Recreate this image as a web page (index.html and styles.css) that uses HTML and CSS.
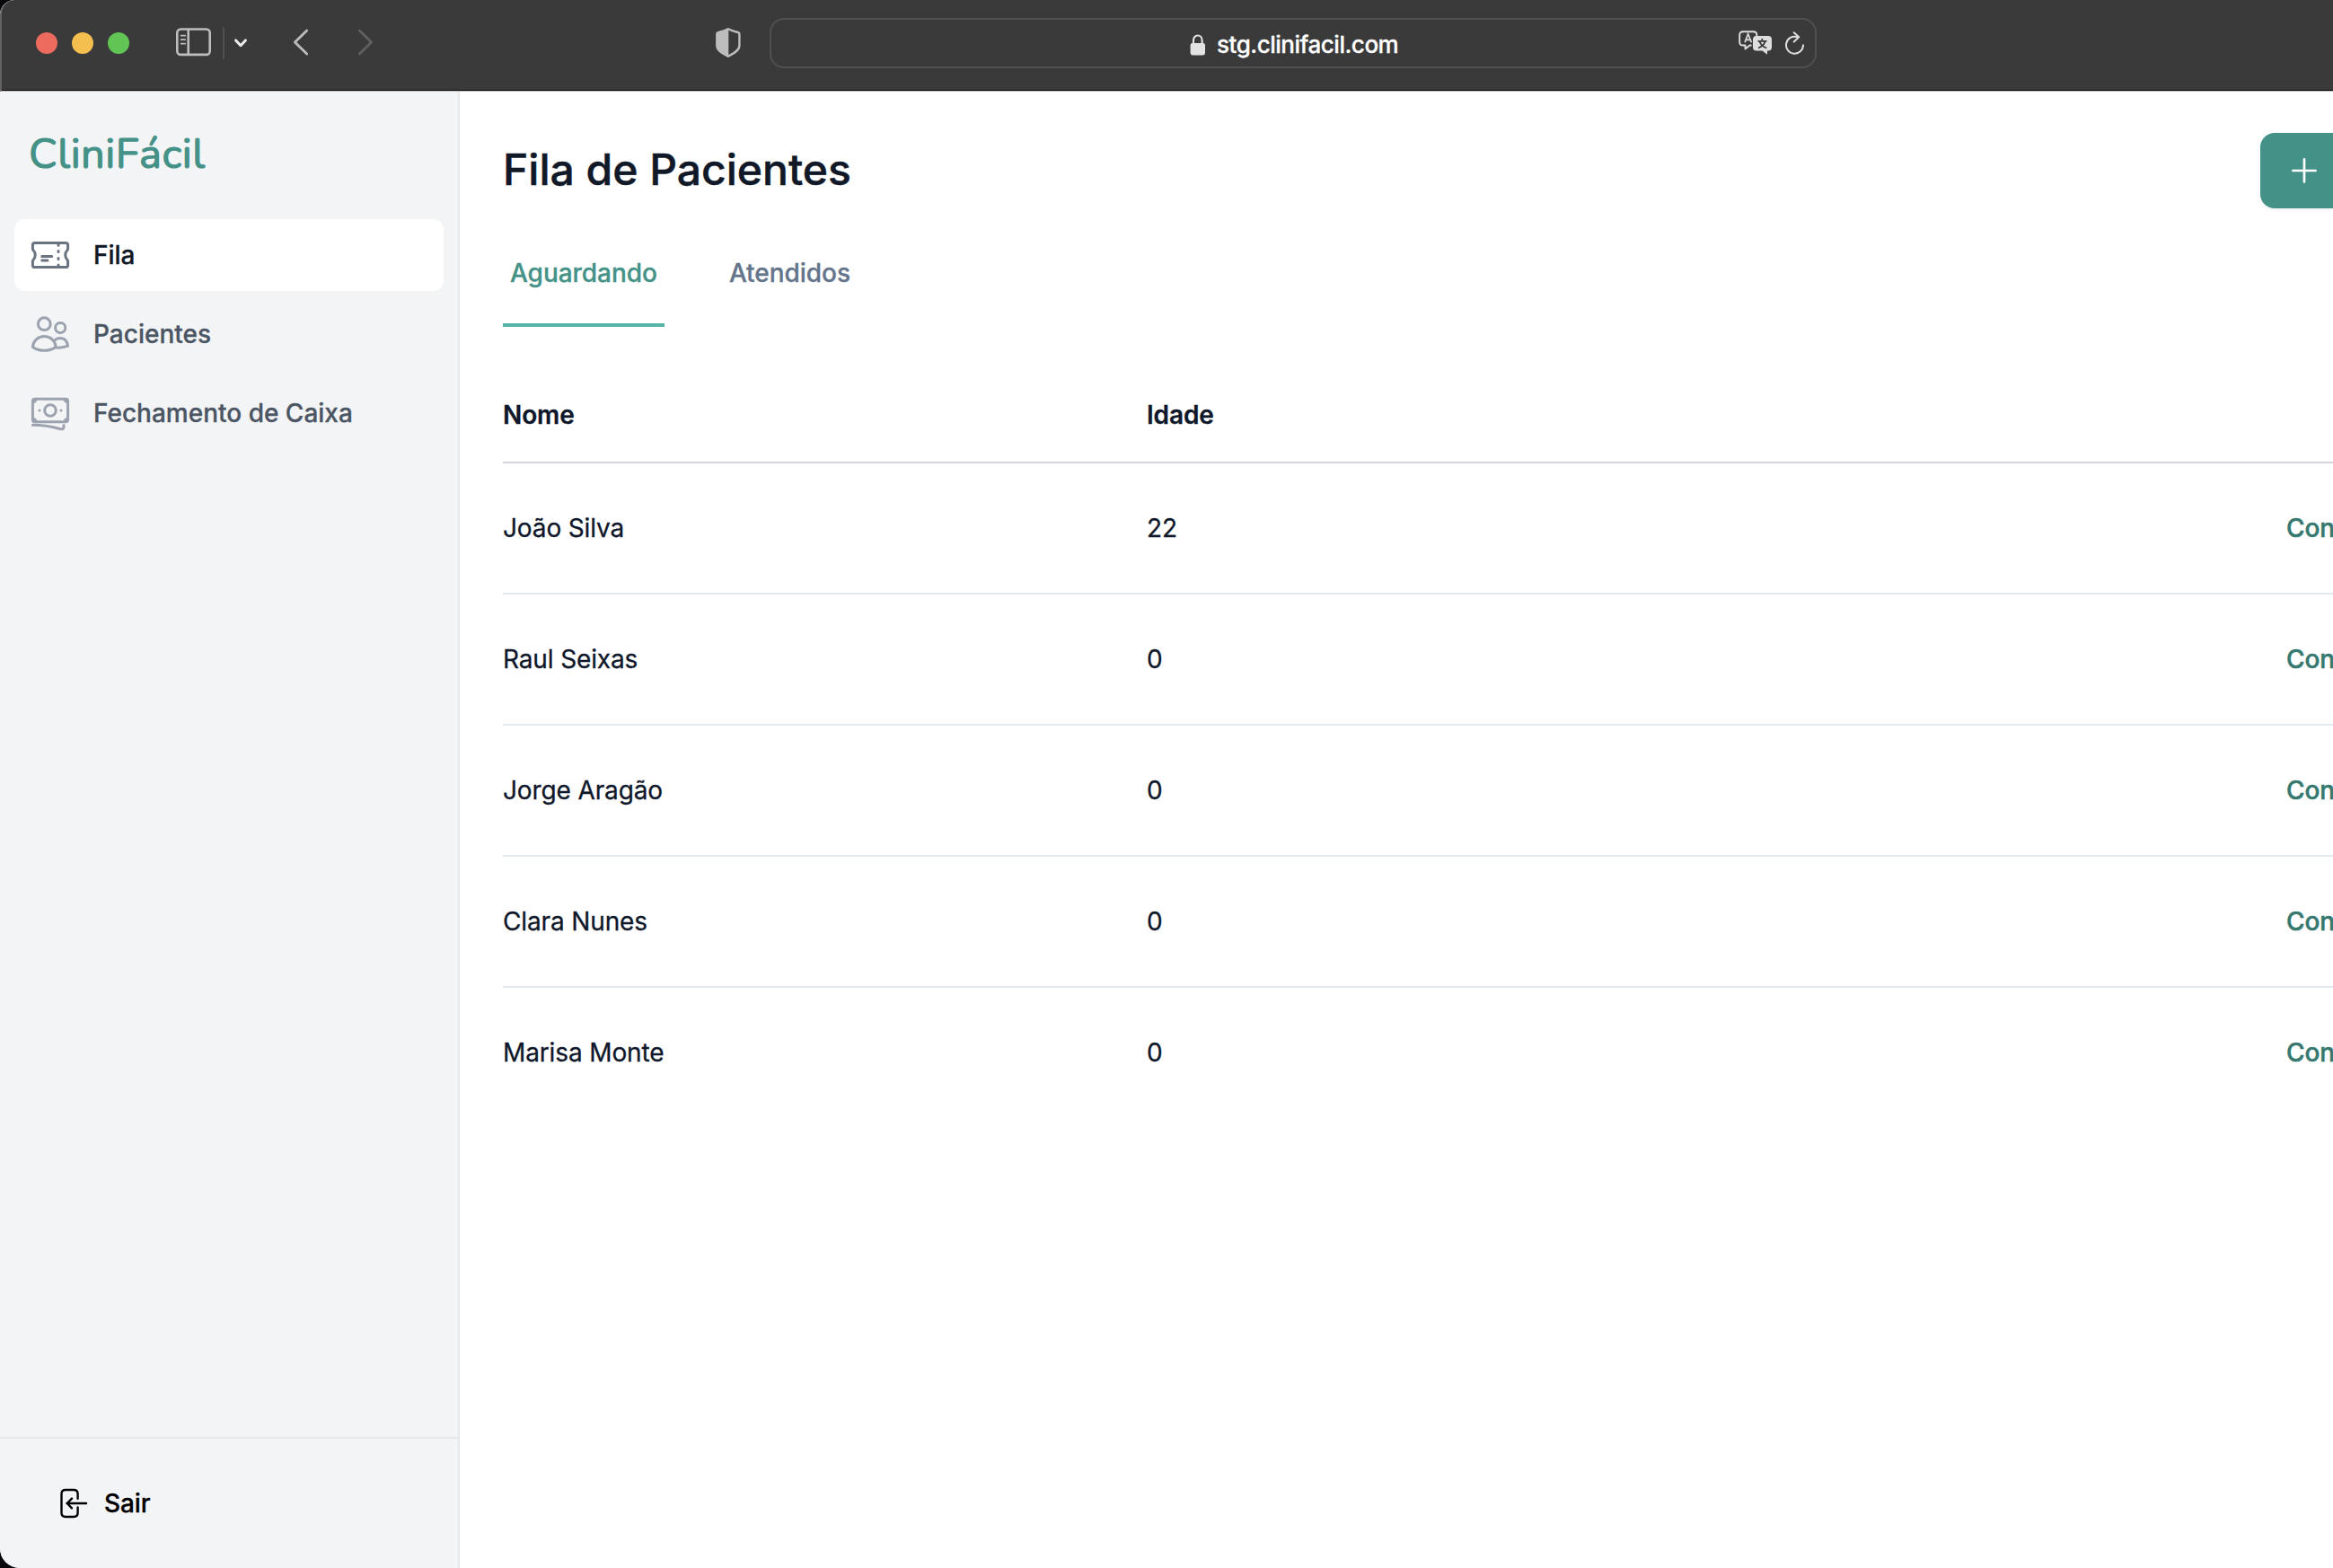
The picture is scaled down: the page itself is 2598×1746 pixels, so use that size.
FILE: index.html
```html
<!DOCTYPE html>
<html lang="pt-BR">
<head>
<meta charset="utf-8">
<title>CliniFácil</title>
<link rel="stylesheet" href="styles.css">
</head>
<body>
<div class="window">
  <header class="toolbar">
    <div class="lights"><span class="light red"></span><span class="light yellow"></span><span class="light green"></span></div>
    <svg class="ico-sidebar" width="40" height="32" viewBox="0 0 40 32" fill="none" stroke="#bdbdbd" stroke-width="2.6"><rect x="1.3" y="1.5" width="36.400" height="28.4" rx="4"/><path d="M13.700 1.5V30"/><path d="M5.6 8.7h4.6M5.6 13.2h4.6M5.6 17.6h4.6" stroke-width="1.7" stroke-linecap="round"/></svg>
    <span class="divider"></span>
    <svg class="ico-down" width="16" height="12" viewBox="0 0 16 12" fill="none" stroke="#ececec" stroke-width="3" stroke-linecap="round" stroke-linejoin="round"><path d="M2.6 2.9L8 8.7l5.4-5.8"/></svg>
    <svg class="ico-back" width="18" height="30" viewBox="0 0 18 30" fill="none" stroke="#bdbdbd" stroke-width="2.8" stroke-linecap="round" stroke-linejoin="round"><path d="M15.7 2L2.4 15l13.3 13"/></svg>
    <svg class="ico-forward" width="18" height="30" viewBox="0 0 18 30" fill="none" stroke="#606060" stroke-width="2.8" stroke-linecap="round" stroke-linejoin="round"><path d="M2.3 2l13.3 13L2.3 28"/></svg>
    <svg class="ico-shield" width="28" height="34" viewBox="0 0 28 34"><path d="M13.8 1.2C10.5 3 6.500 4 2.500 5.100Q1.300 5.500 1.300 7V19.500C1.300 26 9 29 13.800 31.800C18.500 29 26.400 26 26.400 19.500V7Q26.400 5.500 25.200 5.100C21.200 4 17.100 3 13.800 1.200Z" fill="none" stroke="#bdbdbd" stroke-width="2.400"/><path d="M14.300 1.200C10.500 3 6.500 4 2.500 5.100Q1.300 5.500 1.300 7V19.500C1.300 26 9 29 14.300 31.800Z" fill="#bdbdbd"/></svg>
    <div class="address">
      <svg class="ico-lock" width="18" height="24" viewBox="0 0 18 24"><rect x=".6" y="10" width="16.400" height="13.500" rx="2.400" fill="#e3e3e3"/><path d="M4 11V6.800a4.800 5.300 0 0 1 9.600 0V11" fill="none" stroke="#e3e3e3" stroke-width="2.100"/></svg>
      <span class="url">stg.clinifacil.com</span>
      <svg class="ico-translate" width="38" height="28" viewBox="0 0 38 28" fill="none"><path d="M14.500 16.500H12.500L7.500 20.500V16.500H5Q1.200 16.500 1.200 12.700V5Q1.200 1.200 5 1.200H16.500Q20.300 1.200 20.300 5V6" stroke="#dedede" stroke-width="1.900" stroke-linejoin="round"/><path d="M7 13.200L10.600 3.800L14.400 13.200M8.300 10.300H13" stroke="#dedede" stroke-width="1.700"/><path d="M20 6H33Q37 6 37 10V18.500Q37 22.500 33 22.500H32V26.800L26.500 22.500H20Q16 22.500 16 18.500V10Q16 6 20 6Z" fill="#dedede"/><path d="M21.500 11.800H31.500M26.300 9V11.500M22 19.500Q28.500 17 29.500 12M31.300 19.500Q25 17.500 23.500 12" stroke="#3a3a3a" stroke-width="1.700"/></svg>
      <svg class="ico-reload" width="22" height="27" viewBox="0 0 22 27" fill="none" stroke="#dedede" stroke-width="2" stroke-linecap="round" stroke-linejoin="round"><path d="M13.500 6.200A9.500 9.500 0 1 0 20 15.300"/><path d="M9.700 1.200L15.200 6.300L9.700 11.500"/></svg>
    </div>
  </header>
  <div class="app">
    <aside class="sidebar">
      <div class="logo">CliniFácil</div>
      <nav class="nav">
        <a class="nav-item active">
          <svg width="48" height="48" viewBox="0 0 48 48" fill="none" stroke="#6b7280" stroke-width="3" stroke-linecap="round" stroke-linejoin="round"><path d="M6.800 10.400H41.200Q43.600 10.400 43.600 12.800V17Q43.600 18.200 42.600 19Q40.800 20.700 40.800 24Q40.800 27.300 42.600 29Q43.600 29.800 43.600 31V35.200Q43.600 37.600 41.200 37.600H6.800Q4.400 37.600 4.400 35.200V31Q4.400 29.800 5.400 29Q7.200 27.300 7.200 24Q7.200 20.700 5.400 19Q4.400 18.200 4.400 17V12.800Q4.400 10.400 6.800 10.400Z"/><path d="M33 12V13.200M33 19.500V20.500M33 27.400V28.400M33 35V36M14.700 25.400H25.700M14.700 30H21"/></svg>
          <span>Fila</span></a>
        <a class="nav-item">
          <svg width="48" height="48" viewBox="0 0 48 48" fill="none" stroke="#9ca3af" stroke-width="3" stroke-linecap="round" stroke-linejoin="round"><circle cx="17.300" cy="12.700" r="6.900"/><circle cx="35.200" cy="17.100" r="5.600"/><path d="M4.400 38.200A12.950 12.700 0 0 1 30.200 38.200Q25 42.300 17.300 42.300Q9.600 42.300 4.400 38.200Z"/><path d="M28.800 30.900Q31.500 28.500 35.200 28.500Q42.500 29 43.600 37.200Q38 39.700 30.200 39"/></svg>
          <span>Pacientes</span></a>
        <a class="nav-item">
          <svg width="48" height="48" viewBox="0 0 48 48" fill="none" stroke="#9ca3af" stroke-width="3" stroke-linecap="round" stroke-linejoin="round"><rect x="4.400" y="8.300" width="39.200" height="25.400" rx="2.500"/><path d="M5 12.500V9H8.600Q8 11.500 5 12.500ZM43 12.500V9H39.400Q40 11.500 43 12.500ZM5 29.500V33H8.600Q8 30.500 5 29.500ZM43 29.500V33H39.400Q40 30.500 43 29.500Z" fill="#9ca3af" stroke-width="2"/><circle cx="24" cy="21" r="6.300"/><path d="M12 21h.01M36 21h.01"/><path d="M4.400 37.200Q20 37.200 35.500 41.700Q39 42.500 39 39.500V37.400"/></svg>
          <span>Fechamento de Caixa</span></a>
      </nav>
      <div class="sidebar-footer">
        <svg width="32" height="34" viewBox="0 0 32 34" fill="none" stroke="#000" stroke-width="2.400" stroke-linecap="round" stroke-linejoin="round"><path d="M20.600 11.700V6.500Q20.600 2 16.100 2H7Q2.500 2 2.500 6.500V27.500Q2.500 32 7 32H16.100Q20.600 32 20.600 27.500V21.500M30 17H8.500M14 11.600L8.700 17L14 22.400"/></svg>
        <span>Sair</span>
      </div>
    </aside>
    <main class="main">
      <div class="page-head">
        <h1>Fila de Pacientes</h1>
        <button class="add" aria-label="Adicionar"><svg width="28" height="28" viewBox="0 0 28 28" fill="none" stroke="#fff" stroke-width="2.700" stroke-linecap="round"><path d="M14 1.400V26.600M1.400 14H26.600"/></svg></button>
      </div>
      <div class="tabs"><a class="tab current">Aguardando</a><a class="tab">Atendidos</a></div>
      <div class="table">
        <div class="row head"><span>Nome</span><span>Idade</span><span></span></div>
        <div class="row"><span>João Silva</span><span>22</span><a>Con</a></div>
        <div class="row"><span>Raul Seixas</span><span>0</span><a>Con</a></div>
        <div class="row"><span>Jorge Aragão</span><span>0</span><a>Con</a></div>
        <div class="row"><span>Clara Nunes</span><span>0</span><a>Con</a></div>
        <div class="row"><span>Marisa Monte</span><span>0</span><a>Con</a></div>
      </div>
    </main>
  </div>
</div>
</body>
</html>
```
FILE: styles.css
```css
* { box-sizing: border-box; }
html, body { margin: 0; height: 100%; }
body { background: #08080c; overflow: hidden; font-family: Inter, "Liberation Sans", sans-serif; font-size: 28px; color: #111827; -webkit-text-stroke-width: 0.3px; }
svg { flex: none; display: block; }
.window { width: 2598px; height: 1746px; display: flex; flex-direction: column; overflow: hidden; border-radius: 16px 0 0 22px; background: #fff; }

.toolbar { height: 102px; flex: none; display: flex; align-items: flex-start; background: #3a3a3a; border-left: 2px solid #626262; border-bottom: 1px solid #b8b8b8; box-shadow: inset 0 -1px 0 #000; border-top-left-radius: 16px; }
.lights { display: flex; gap: 16px; margin: 36px 0 0 38px; }
.light { width: 24px; height: 24px; border-radius: 50%; }
.red { background: #ed6a5f; }
.yellow { background: #f5bf4f; }
.green { background: #61c555; }
.ico-sidebar { margin: 31px 0 0 52px; }
.divider { width: 2px; height: 36px; margin: 30px 0 0 12px; background: #4e4e4e; }
.ico-down { margin: 42px 0 0 10px; }
.ico-back { margin: 32px 0 0 50px; }
.ico-forward { margin: 32px 0 0 54px; }
.ico-shield { margin: 31px 0 0 381px; }
.address { width: 1166px; height: 56px; margin: 20px 0 0 32px; border: 2px solid #505050; border-radius: 16px; display: flex; align-items: flex-start; }
.ico-lock { margin: 16px 0 0 466px; }
.url { width: 204px; margin: 12px 0 0 12px; font-size: 26px; line-height: 32px; letter-spacing: -0.48px; font-weight: 500; color: #fff; white-space: nowrap; }
.ico-translate { margin: 12px 0 0 377px; }
.ico-reload { margin: 13px 0 0 14px; }

.app { flex: 1; display: flex; min-height: 0; }
.sidebar { width: 512px; flex: none; display: flex; flex-direction: column; background: #f3f4f6; border-right: 2px solid #e5e7eb; }
.logo { height: 142px; padding: 40px 0 0 32px; font-family: Nunito, Lato, sans-serif; font-size: 47px; line-height: 60px; color: #449287; -webkit-text-stroke: 1.2px #449287; letter-spacing: 0.55px; }
.nav { flex: 1; display: flex; flex-direction: column; gap: 8px; padding: 0 16px; }
.nav-item { height: 80px; display: flex; align-items: center; gap: 24px; padding: 0 16px; border-radius: 12px; font-weight: 500; color: #4b5563; }
.nav-item.active { background: #fff; color: #111827; }
.sidebar-footer { height: 146px; display: flex; align-items: center; gap: 18px; padding-left: 66px; border-top: 2px solid #e5e7eb; font-weight: 500; color: #000; letter-spacing: -0.1px; }

.main { flex: 1; min-width: 0; display: flex; flex-direction: column; padding: 46px 0 0 48px; }
.page-head { height: 84px; display: flex; align-items: center; justify-content: space-between; }
h1 { margin: 0; padding-bottom: 3px; font-size: 48px; line-height: 64px; font-weight: 500; color: #111827; -webkit-text-stroke-width: 0.5px; }
.add { width: 81px; height: 84px; padding: 0 0 0 35px; border: 0; border-radius: 16px 0 0 16px; background: #449287; display: flex; align-items: center; box-shadow: 0 2px 4px rgba(0, 0, 0, .06); }
.tabs { height: 132px; display: flex; gap: 64px; }
.tab { padding: 52px 8px 0; line-height: 40px; font-weight: 500; letter-spacing: -0.04px; color: #64748b; border-bottom: 4px solid transparent; }
.tab.current { color: #449287; border-color: #54b5a6; }
.table { display: flex; flex-direction: column; margin-top: 32px; }
.row { height: 146px; display: grid; grid-template-columns: 717px 1269px 1fr; align-items: center; border-bottom: 2px solid #e2e8f0; color: #0f172a; letter-spacing: -0.13px; white-space: nowrap; }
.row:last-child { border-bottom: 0; height: 144px; }
.row.head { height: 120px; padding-top: 14px; font-weight: 600; border-color: #d1d5db; }
.row a { font-weight: 500; color: #35786f; -webkit-text-stroke-width: 0.5px; }
```
